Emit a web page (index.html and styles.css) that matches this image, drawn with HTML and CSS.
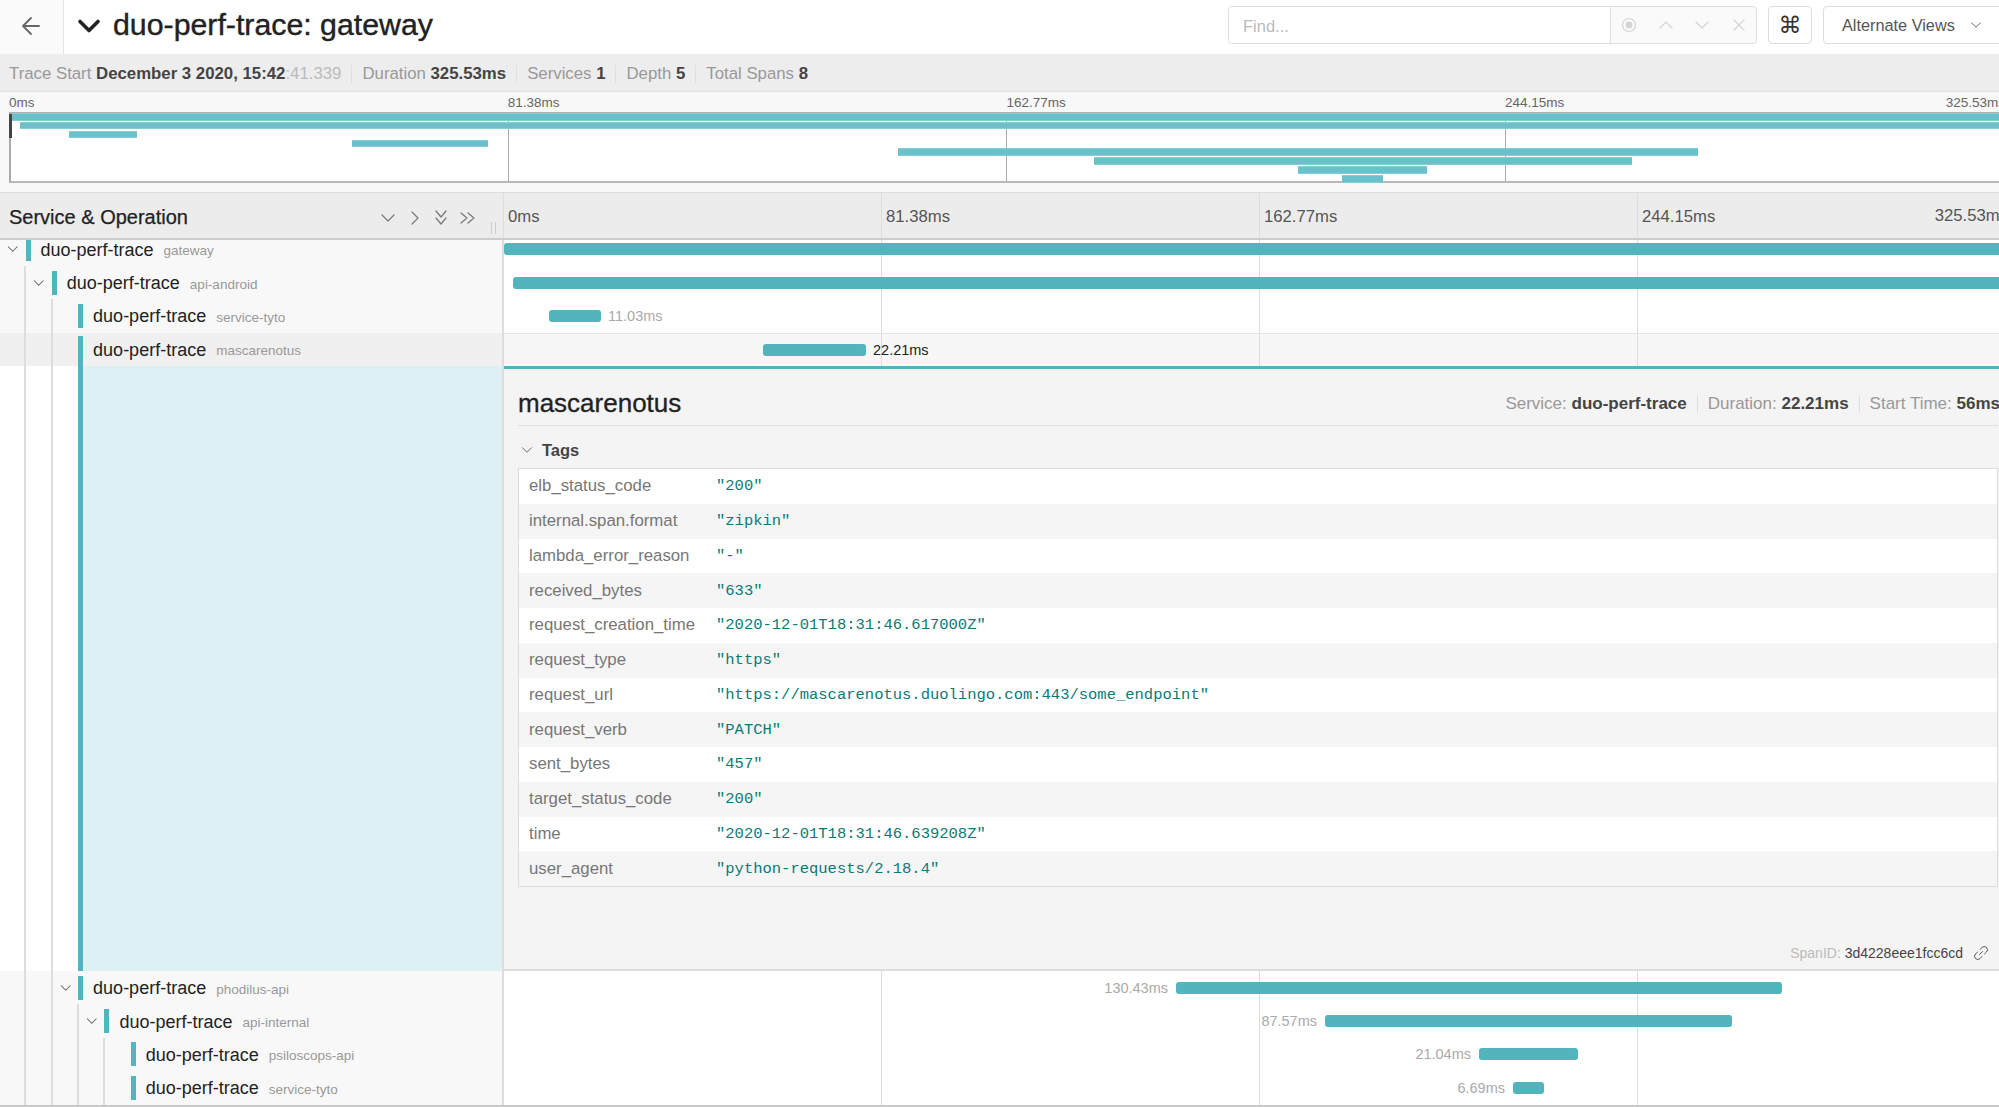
FILE: index.html
```html
<!DOCTYPE html>
<html lang="en">
<head>
<meta charset="utf-8">
<title>duo-perf-trace: gateway</title>
<link rel="stylesheet" href="styles.css">
</head>
<body>
<svg class="defs" aria-hidden="true">
  <symbol id="i-down" viewBox="0 0 16 16"><path d="M2 5l6 6 6-6"/></symbol>
  <symbol id="i-up" viewBox="0 0 16 16"><path d="M2 11l6-6 6 6"/></symbol>
  <symbol id="i-right" viewBox="0 0 16 16"><path d="M5 2l6 6-6 6"/></symbol>
  <symbol id="i-ddown" viewBox="0 0 16 16"><path d="M3 1l5 6 5-6M3 8l5 6 5-6"/></symbol>
  <symbol id="i-dright" viewBox="0 0 16 16"><path d="M1 3l6 5-6 5M8 3l6 5-6 5"/></symbol>
</svg>
<div class="root">
  <header class="topbar">
    <a class="back"><svg class="back-icon" viewBox="0 0 20 20"><path d="M18 10H2.5M10 2l-8 8 8 8"/></svg></a>
    <svg class="title-chevron"><use href="#i-down"/></svg>
    <h1 class="title">duo-perf-trace: gateway</h1>
    <div class="controls">
      <div class="find">
        <div class="find-input">Find...</div>
        <div class="find-tools">
          <svg class="tool" viewBox="0 0 16 16"><circle cx="8" cy="8" r="6.5"/><circle class="dot" cx="8" cy="8" r="2.8"/></svg>
          <svg class="tool"><use href="#i-up"/></svg>
          <svg class="tool"><use href="#i-down"/></svg>
          <svg class="tool" viewBox="0 0 16 16"><path d="M3 3l10 10M13 3L3 13"/></svg>
        </div>
      </div>
      <div class="btn btn-cmd">⌘</div>
      <div class="btn btn-alt">Alternate Views<svg class="alt-chevron"><use href="#i-down"/></svg></div>
    </div>
  </header>

  <div class="meta">
    <span class="meta-item">Trace Start <b>December 3 2020, 15:42</b><span class="faint">:41.339</span></span>
    <span class="meta-item">Duration <b>325.53ms</b></span>
    <span class="meta-item">Services <b>1</b></span>
    <span class="meta-item">Depth <b>5</b></span>
    <span class="meta-item">Total Spans <b>8</b></span>
  </div>

  <section class="overview">
    <div class="ov-labels">
      <span>0ms</span><span>81.38ms</span><span>162.77ms</span><span>244.15ms</span><span class="ov-end">325.53ms</span>
    </div>
    <div class="ov-graph">
      <div class="ov-handle"></div>
      <div class="ov-bars">
        <div class="ov-bar" style="margin-left:0;width:1994px"></div>
        <div class="ov-bar" style="margin-left:9px;width:1985px"></div>
        <div class="ov-bar" style="margin-left:58px;width:68px"></div>
        <div class="ov-bar" style="margin-left:341px;width:136px"></div>
        <div class="ov-bar" style="margin-left:887px;width:800px"></div>
        <div class="ov-bar" style="margin-left:1083px;width:538px"></div>
        <div class="ov-bar" style="margin-left:1287px;width:129px"></div>
        <div class="ov-bar" style="margin-left:1331px;width:41px"></div>
      </div>
    </div>
  </section>

  <div class="grid-head">
    <div class="gh-left">
      <span class="gh-title">Service &amp; Operation</span>
      <div class="gh-icons">
        <svg class="gh-icon"><use href="#i-down"/></svg>
        <svg class="gh-icon"><use href="#i-right"/></svg>
        <svg class="gh-icon"><use href="#i-ddown"/></svg>
        <svg class="gh-icon"><use href="#i-dright"/></svg>
      </div>
      <div class="gh-resizer"></div>
    </div>
    <div class="gh-right ticks">
      <span class="gh-tick">0ms</span><span class="gh-tick">81.38ms</span><span class="gh-tick">162.77ms</span><span class="gh-tick">244.15ms</span><span class="gh-end">325.53ms</span>
    </div>
  </div>

  <div class="rows">
    <div class="row">
      <div class="tree">
        <svg class="toggle"><use href="#i-down"/></svg><i class="stripe"></i>
        <span class="svc">duo-perf-trace</span><span class="op">gateway</span>
      </div>
      <div class="lane ticks"><div class="bar" style="margin-left:0;width:1512px"></div></div>
    </div>
    <div class="row">
      <div class="tree">
        <i class="guide"></i>
        <svg class="toggle"><use href="#i-down"/></svg><i class="stripe"></i>
        <span class="svc">duo-perf-trace</span><span class="op">api-android</span>
      </div>
      <div class="lane ticks"><div class="bar" style="margin-left:9px;width:1503px"></div></div>
    </div>
    <div class="row">
      <div class="tree">
        <i class="guide"></i><i class="guide"></i>
        <span class="toggle"></span><i class="stripe"></i>
        <span class="svc">duo-perf-trace</span><span class="op">service-tyto</span>
      </div>
      <div class="lane ticks"><div class="bar" style="margin-left:45px;width:52px"><span class="bar-label after">11.03ms</span></div></div>
    </div>
    <div class="row row-open">
      <div class="tree">
        <i class="guide"></i><i class="guide"></i>
        <span class="toggle"></span><i class="stripe"></i>
        <span class="svc">duo-perf-trace</span><span class="op">mascarenotus</span>
      </div>
      <div class="lane ticks"><div class="bar" style="margin-left:259px;width:103px"><span class="bar-label after dark">22.21ms</span></div></div>
    </div>

    <div class="detail-row">
      <div class="detail-tree">
        <i class="guide"></i><i class="guide"></i>
        <span class="toggle"></span><i class="stripe"></i>
        <div class="detail-fill"></div>
      </div>
      <div class="detail">
        <div class="detail-head">
          <h2 class="detail-title">mascarenotus</h2>
          <div class="detail-meta">
            <span class="meta-item">Service: <b>duo-perf-trace</b></span>
            <span class="meta-item">Duration: <b>22.21ms</b></span>
            <span class="meta-item">Start Time: <b>56ms</b></span>
          </div>
        </div>
        <div class="tags-head"><svg class="tags-chevron"><use href="#i-down"/></svg><span>Tags</span></div>
        <div class="tags">
          <div class="tag"><span class="tag-key">elb_status_code</span><span class="tag-val">"200"</span></div>
          <div class="tag"><span class="tag-key">internal.span.format</span><span class="tag-val">"zipkin"</span></div>
          <div class="tag"><span class="tag-key">lambda_error_reason</span><span class="tag-val">"-"</span></div>
          <div class="tag"><span class="tag-key">received_bytes</span><span class="tag-val">"633"</span></div>
          <div class="tag"><span class="tag-key">request_creation_time</span><span class="tag-val">"2020-12-01T18:31:46.617000Z"</span></div>
          <div class="tag"><span class="tag-key">request_type</span><span class="tag-val">"https"</span></div>
          <div class="tag"><span class="tag-key">request_url</span><span class="tag-val">"https://mascarenotus.duolingo.com:443/some_endpoint"</span></div>
          <div class="tag"><span class="tag-key">request_verb</span><span class="tag-val">"PATCH"</span></div>
          <div class="tag"><span class="tag-key">sent_bytes</span><span class="tag-val">"457"</span></div>
          <div class="tag"><span class="tag-key">target_status_code</span><span class="tag-val">"200"</span></div>
          <div class="tag"><span class="tag-key">time</span><span class="tag-val">"2020-12-01T18:31:46.639208Z"</span></div>
          <div class="tag"><span class="tag-key">user_agent</span><span class="tag-val">"python-requests/2.18.4"</span></div>
        </div>
        <div class="detail-foot">
          <span class="span-id"><span class="faint">SpanID:</span> 3d4228eee1fcc6cd</span>
          <svg class="link-icon" viewBox="0 0 16 16"><path d="M6.5 9.5l3-3M7 4.5l2-2a2.6 2.6 0 0 1 4.5 4.5l-2 2M9 11.5l-2 2A2.6 2.6 0 0 1 2.500 9l2-2"/></svg>
        </div>
      </div>
    </div>

    <div class="row">
      <div class="tree">
        <i class="guide"></i><i class="guide"></i>
        <svg class="toggle"><use href="#i-down"/></svg><i class="stripe"></i>
        <span class="svc">duo-perf-trace</span><span class="op">phodilus-api</span>
      </div>
      <div class="lane ticks"><div class="bar" style="margin-left:672px;width:606px"><span class="bar-label before">130.43ms</span></div></div>
    </div>
    <div class="row">
      <div class="tree">
        <i class="guide"></i><i class="guide"></i><i class="guide"></i>
        <svg class="toggle"><use href="#i-down"/></svg><i class="stripe"></i>
        <span class="svc">duo-perf-trace</span><span class="op">api-internal</span>
      </div>
      <div class="lane ticks"><div class="bar" style="margin-left:821px;width:407px"><span class="bar-label before">87.57ms</span></div></div>
    </div>
    <div class="row">
      <div class="tree">
        <i class="guide"></i><i class="guide"></i><i class="guide"></i><i class="guide"></i>
        <span class="toggle"></span><i class="stripe"></i>
        <span class="svc">duo-perf-trace</span><span class="op">psiloscops-api</span>
      </div>
      <div class="lane ticks"><div class="bar" style="margin-left:975px;width:99px"><span class="bar-label before">21.04ms</span></div></div>
    </div>
    <div class="row">
      <div class="tree">
        <i class="guide"></i><i class="guide"></i><i class="guide"></i><i class="guide"></i>
        <span class="toggle"></span><i class="stripe"></i>
        <span class="svc">duo-perf-trace</span><span class="op">service-tyto</span>
      </div>
      <div class="lane ticks"><div class="bar" style="margin-left:1009px;width:31px"><span class="bar-label before">6.69ms</span></div></div>
    </div>
  </div>
</div>
</body>
</html>
```
FILE: styles.css
```css
* { box-sizing: border-box; }
html, body { margin: 0; height: 100%; overflow: hidden; background: #fff; }
body { font-family: "Liberation Sans", Arial, sans-serif; color: #222; font-size: 16px; }
.defs { display: none; }
svg { display: block; fill: none; stroke: currentColor; stroke-linecap: round; stroke-linejoin: round; }
b { font-weight: 700; }

.root { width: 2016px; height: 1107px; border-bottom: 2px solid #c8c8c8; overflow: hidden; }

/* top bar */
.topbar { height: 54px; display: flex; align-items: center; background: #fff; }
.back { width: 64px; height: 54px; display: flex; align-items: center; justify-content: center; background: #fafafa; border-right: 1px solid #e4e4e4; color: #666; }
.back-icon { width: 20px; height: 20px; stroke-width: 1.8; margin: 0 2px 2px 0; }
.title-chevron { width: 24px; height: 24px; margin: 0 0 2px 13px; stroke-width: 2.4; color: #222; }
.title { margin: 0 0 4px 12px; font-size: 30.300px; font-weight: 400; color: #222; -webkit-text-stroke: 0.4px #222; white-space: nowrap; }
.controls { margin: 0 0 4px auto; display: flex; align-items: center; gap: 11px; }
.find { display: flex; width: 529px; height: 38px; border: 1px solid #ddd; border-radius: 4px; background: #fafafa; }
.find-input { width: 382px; background: #fff; border-right: 1px solid #ddd; border-radius: 3px 0 0 3px; padding: 0 14px; line-height: 38px; color: #bbb; font-size: 16.500px; }
.find-tools { flex: 1; display: flex; align-items: center; justify-content: space-between; padding: 0 9px 0 10px; color: #d4d4d4; }
.tool { width: 16px; height: 16px; stroke-width: 1.2; }
.tool .dot { fill: currentColor; }
.btn { height: 38px; border: 1px solid #ddd; border-radius: 4px; display: flex; align-items: center; color: #555; background: #fff; }
.btn-cmd { width: 44px; justify-content: center; font-family: "DejaVu Sans", sans-serif; font-size: 23px; color: #333; }
.btn-alt { width: 193px; padding-left: 18px; font-size: 16.300px; }
.alt-chevron { width: 12px; height: 12px; margin-left: 15px; stroke-width: 1.2; }

/* meta strip */
.meta { height: 38px; background: #ededed; display: flex; align-items: center; padding: 2px 0 0 9px; color: #999; border-bottom: 1px solid #e2e2e2; font-size: 16.800px; }
.meta-item { padding-right: 10px; margin-right: 10px; border-right: 1px solid #dfdfdf; line-height: 18px; }
.meta-item:last-child { border-right: 0; margin-right: 0; padding-right: 0; }
.meta-item b { color: #444; }
.faint { color: #bbb; }

/* overview */
.overview { height: 101px; background: #f8f8f8; padding-left: 9px; border-bottom: 1px solid #ddd; }
.ov-labels { height: 20px; display: grid; grid-template-columns: repeat(4, 498.7px) 1fr; font-size: 13.5px; line-height: 21px; color: #666; white-space: nowrap; }
.ov-end { margin-left: -58px; }
.ov-graph { position: relative; height: 71px; background-color: #fff; border-top: 2px solid #b0b0b0; border-bottom: 2px solid #b8b8b8; border-left: 2px solid #aaa; background-image: repeating-linear-gradient(to right, transparent 0 496.700px, #aaa 496.700px 497.700px, transparent 497.700px 498.700px); }
.ov-handle { position: absolute; z-index: 1; left: -2px; top: 0; width: 3px; height: 24px; background: #444; }
.ov-bars { margin-top: -1.300px; }
.ov-bar { height: 7.800px; margin-bottom: 1.150px; background: #69c1c9; box-shadow: inset 0 1px 0 #86ced4, inset 0 -1px 0 #86ced4; }

/* grid header */
.grid-head { position: relative; z-index: 1; display: grid; grid-template-columns: 504px 1fr; height: 47px; background: #ececec; border-bottom: 2px solid #ccc; }
.gh-left { position: relative; display: flex; align-items: center; padding: 3px 0 0 9px; border-right: 1px solid #ddd; }
.gh-title { font-size: 20px; color: #222; -webkit-text-stroke: 0.25px #222; }
.gh-icons { position: absolute; left: 380px; top: 17px; display: flex; gap: 10.500px; color: #777; }
.gh-icon { width: 16px; height: 16px; stroke-width: 1.2; }
.gh-resizer { position: absolute; right: 7px; bottom: 4px; width: 5px; height: 12px; border-left: 1px solid #ccc; border-right: 1px solid #ccc; }
.gh-right { display: grid; grid-template-columns: repeat(4, 378px); align-items: center; position: relative; padding-top: 3px; color: #555; font-size: 16.700px; }
.gh-tick { padding-left: 4px; }
.gh-end { position: absolute; right: 8px; }
.ticks { background-image: repeating-linear-gradient(to right, transparent 0 377px, #ddd 377px 378px); }

/* rows */
.rows { margin-top: -7.500px; }
.row { display: grid; grid-template-columns: 504px 1fr; height: 33.400px; }
.tree { display: flex; align-items: center; height: 100%; background: #f8f8f8; border-right: 2px solid #ddd; }
.guide { flex: none; width: 26.300px; height: 100%; border-right: 2px solid #ddd; }
.toggle { flex: none; width: 25.500px; height: 12px; padding: 0 6px; stroke-width: 1.4; color: #666; }
.stripe { flex: none; width: 5px; height: 24px; background: #50b5bf; }
.svc { margin-left: 10px; padding-top: 2px; font-size: 18px; color: #222; white-space: nowrap; }
.op { margin-left: 10px; padding-top: 3px; font-size: 13.500px; color: #999; white-space: nowrap; }
.lane { display: flex; align-items: center; }
.bar { position: relative; height: 12px; background: #52b4bc; border-radius: 3px; flex: none; }
.bar-label { position: absolute; top: -3px; font-size: 14.500px; line-height: 18px; color: #aaa; white-space: nowrap; }
.bar-label.after { left: calc(100% + 7px); }
.bar-label.before { right: calc(100% + 8px); }
.bar-label.dark { color: #222; }

.row-open .tree { background: #f0f0f0; }
.row-open .stripe { align-self: flex-end; height: 30px; }
.row-open .lane { background-color: #f7f7f7; border-top: 1px solid #e4e4e4; }

/* detail */
.detail-row { display: grid; grid-template-columns: 504px 1fr; height: 604.900px; }
.detail-tree { display: flex; background: #fff; border-right: 2px solid #ddd; }
.detail-tree .stripe { height: 100%; }
.detail-fill { flex: 1; background: #ddf0f3; }
.detail { display: flex; flex-direction: column; background: #f4f4f4; border-top: 3px solid #50b5bf; border-bottom: 2px solid #ddd; padding: 0 18px 0 14px; }
.detail-head { display: flex; align-items: center; justify-content: space-between; height: 57px; padding-top: 13px; border-bottom: 1px solid #ddd; }
.detail-title { margin: 0; font-size: 26px; font-weight: 400; color: #222; -webkit-text-stroke: 0.3px #222; }
.detail-meta { display: flex; color: #999; white-space: nowrap; margin-right: -2px; font-size: 17px; }
.tags-head { display: flex; align-items: center; height: 42px; padding: 6px 0 0 3px; color: #444; font-weight: 700; font-size: 16.500px; }
.tags-chevron { width: 12px; height: 12px; margin-right: 9px; stroke-width: 1.3; color: #666; }
.tags { background: #fff; border: 1px solid #ddd; }
.tag { display: flex; align-items: center; height: 34.750px; }
.tag:nth-child(even) { background: #f5f5f5; }
.tag-key { width: 197px; padding-left: 10px; color: #777; font-size: 16.800px; white-space: nowrap; }
.tag-val { font-family: "Liberation Mono", monospace; font-size: 15.500px; color: #0b7a75; white-space: pre; }
.detail-foot { margin-top: auto; height: 32px; display: flex; align-items: center; justify-content: flex-end; gap: 10px; margin-right: 9px; font-size: 14px; color: #444; }
.span-id .faint { color: #bbb; }
.link-icon { width: 16px; height: 16px; stroke-width: 1; color: #555; }
```
